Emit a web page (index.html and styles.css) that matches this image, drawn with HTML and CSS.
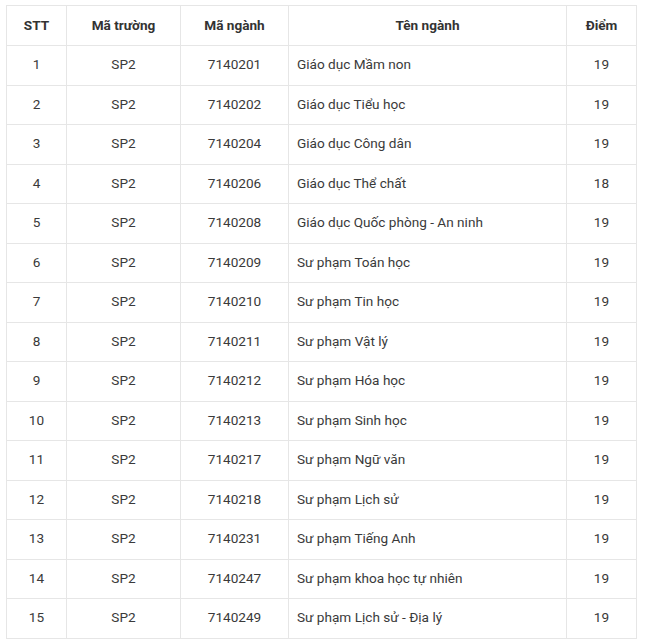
FILE: index.html
```html
<!DOCTYPE html>
<html lang="vi">
<head>
<meta charset="utf-8">
<link rel="stylesheet" href="styles.css">
</head>
<body>
<div class="wrap">
<table class="score">
<colgroup>
<col class="c1"><col class="c2"><col class="c3"><col class="c4"><col class="c5">
</colgroup>
<thead>
<tr><th>STT</th><th>Mã trường</th><th>Mã ngành</th><th>Tên ngành</th><th>Điểm</th></tr>
</thead>
<tbody>
<tr><td>1</td><td>SP2</td><td>7140201</td><td class="name">Giáo dục Mầm non</td><td>19</td></tr>
<tr><td>2</td><td>SP2</td><td>7140202</td><td class="name">Giáo dục Tiểu học</td><td>19</td></tr>
<tr><td>3</td><td>SP2</td><td>7140204</td><td class="name">Giáo dục Công dân</td><td>19</td></tr>
<tr><td>4</td><td>SP2</td><td>7140206</td><td class="name">Giáo dục Thể chất</td><td>18</td></tr>
<tr><td>5</td><td>SP2</td><td>7140208</td><td class="name">Giáo dục Quốc phòng - An ninh</td><td>19</td></tr>
<tr><td>6</td><td>SP2</td><td>7140209</td><td class="name">Sư phạm Toán học</td><td>19</td></tr>
<tr><td>7</td><td>SP2</td><td>7140210</td><td class="name">Sư phạm Tin học</td><td>19</td></tr>
<tr><td>8</td><td>SP2</td><td>7140211</td><td class="name">Sư phạm Vật lý</td><td>19</td></tr>
<tr><td>9</td><td>SP2</td><td>7140212</td><td class="name">Sư phạm Hóa học</td><td>19</td></tr>
<tr><td>10</td><td>SP2</td><td>7140213</td><td class="name">Sư phạm Sinh học</td><td>19</td></tr>
<tr><td>11</td><td>SP2</td><td>7140217</td><td class="name">Sư phạm Ngữ văn</td><td>19</td></tr>
<tr><td>12</td><td>SP2</td><td>7140218</td><td class="name">Sư phạm Lịch sử</td><td>19</td></tr>
<tr><td>13</td><td>SP2</td><td>7140231</td><td class="name">Sư phạm Tiếng Anh</td><td>19</td></tr>
<tr><td>14</td><td>SP2</td><td>7140247</td><td class="name">Sư phạm khoa học tự nhiên</td><td>19</td></tr>
<tr><td>15</td><td>SP2</td><td>7140249</td><td class="name">Sư phạm Lịch sử - Địa lý</td><td>19</td></tr>
</tbody>
</table>
</div>
</body>
</html>
```
FILE: styles.css
```css
html, body {
  margin: 0;
  padding: 0;
  background: #fff;
}
.wrap {
  padding: 5px 6px;
}
.score {
  border-collapse: collapse;
  table-layout: fixed;
  width: 631px;
  font-family: Roboto, "Noto Sans", sans-serif;
  font-size: 13.6px;
  color: #3a3a3a;
}
.c1 { width: 60px; }
.c2 { width: 114px; }
.c3 { width: 108px; }
.c4 { width: 278px; }
.c5 { width: 70px; }
.score th, .score td {
  border: 1px solid #e6e6e6;
  text-align: center;
  padding: 0 8px 2px;
  vertical-align: middle;
}
.score th {
  height: 37px;
  font-weight: 700;
  color: #333;
}
.score td {
  height: 36.5px;
}
.score td.name {
  text-align: left;
}
```
